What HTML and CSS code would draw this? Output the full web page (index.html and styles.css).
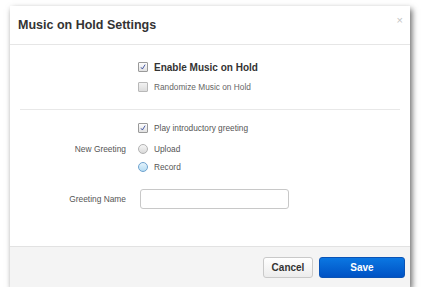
FILE: index.html
```html
<!DOCTYPE html>
<html lang="en">
  <head>
    <meta charset="UTF-8" />
    <meta name="viewport" content="width=device-width, initial-scale=1.0" />
    <title>Music on Hold Settings</title>
    <link rel="stylesheet" href="styles.css">
  </head>
  <body>
    <div class="modal">
      <div class="modalHeader">
        <h1>Music on Hold Settings</h1>
        <span class="close">&times;</span>
      </div>
      <div class="modalBody">
        <div class="section first">
          <div class="row">
            <span class="label"></span>
            <label class="check bold"><span class="box on"><svg viewBox="0 0 9 9"><path d="M2.2 4.8 L3.8 6.8 L6.9 1.8" /></svg></span>Enable Music on Hold</label>
          </div>
          <div class="row gap2">
            <span class="label"></span>
            <label class="check muted"><span class="box off"></span>Randomize Music on Hold</label>
          </div>
        </div>
        <div class="section second">
          <div class="row">
            <span class="label"></span>
            <label class="check"><span class="box on"><svg viewBox="0 0 9 9"><path d="M2.2 4.8 L3.8 6.8 L6.9 1.8" /></svg></span>Play introductory greeting</label>
          </div>
          <div class="row gap3">
            <span class="label">New Greeting</span>
            <label class="check"><span class="radio"></span>Upload</label>
          </div>
          <div class="row">
            <span class="label"></span>
            <label class="check"><span class="radio hover"></span>Record</label>
          </div>
          <div class="row field">
            <span class="label">Greeting Name</span>
            <input type="text" class="nameInput" />
          </div>
        </div>
      </div>
      <div class="modalFooter">
        <button class="btn cancel">Cancel</button>
        <button class="btn save">Save</button>
      </div>
    </div>
  </body>
</html>
```

FILE: styles.css
```css
body {
  margin: 0;
  background: #fff;
  font-family: "Liberation Sans", Arial, sans-serif;
}
.modal {
  width: 400px;
  margin: 6px 0 0 10px;
  background: #fff;
  box-shadow: 2px 3px 6px rgba(0, 0, 0, 0.6);
}
.modalHeader {
  height: 38px;
  border-bottom: 1px solid #e6e6e6;
  display: flex;
  align-items: center;
  justify-content: space-between;
  padding: 0 8px 0 8px;
}
h1 {
  margin: 0;
  font-size: 12.5px;
  font-weight: bold;
  color: #333;
}
.close {
  font-size: 11px;
  color: #c4c4c4;
  margin-top: -10px;
  margin-right: -1px;
}
.section {
  margin: 0 10px;
}
.section.first {
  padding: 13px 0 13px;
  border-bottom: 1px solid #e8e8e8;
}
.section.second {
  padding: 9px 0 37px;
}
.row {
  display: flex;
  align-items: center;
  height: 18px;
}
.row.gap2 {
  margin-top: 2px;
}
.row.gap3 {
  margin-top: 3px;
}
.row.field {
  height: 20px;
  margin-top: 13px;
}
.label {
  width: 106px;
  margin-right: 12px;
  text-align: right;
  font-size: 8.4px;
  color: #555;
}
.check {
  display: flex;
  align-items: center;
  font-size: 8.3px;
  color: #555;
}
.check.bold {
  font-size: 10px;
  font-weight: bold;
  color: #333;
}
.check.muted {
  color: #666;
}
.box {
  width: 8px;
  height: 8px;
  border: 1px solid #9a9a9a;
  border-radius: 1px;
  background: linear-gradient(#fdfdfd, #e2e2e2);
  margin-right: 6px;
  display: flex;
}
.box.off {
  border-color: #b8b8b8;
  background: linear-gradient(#f2f2f2, #dcdcdc);
}
.box svg {
  width: 8px;
  height: 8px;
}
.box path {
  fill: none;
  stroke: #34489a;
  stroke-width: 1;
}
.radio {
  width: 8px;
  height: 8px;
  border: 1px solid #b2b2b2;
  border-radius: 50%;
  background: linear-gradient(#f6f6f6, #dadada);
  margin-right: 6px;
}
.radio.hover {
  border-color: #6ea3cf;
  background: linear-gradient(#e4f3fc, #b6dcf3);
}
.nameInput {
  width: 149px;
  height: 20px;
  box-sizing: border-box;
  margin-left: 2px;
  border: 1px solid #c8c8c8;
  border-radius: 3px;
  padding: 0 5px;
}
.modalFooter {
  height: 41px;
  box-sizing: border-box;
  border-top: 1px solid #e2e2e2;
  background: #f4f4f4;
  display: flex;
  justify-content: flex-end;
  align-items: flex-start;
  padding: 10px 5px 0 0;
  gap: 6px;
}
.btn {
  height: 21px;
  border-radius: 3px;
  font-family: "Liberation Sans", Arial, sans-serif;
  font-size: 10px;
  font-weight: bold;
  padding: 0;
}
.cancel {
  width: 50px;
  color: #333;
  border: 1px solid #c9c9c9;
  background: linear-gradient(#ffffff, #ececec);
}
.save {
  width: 86px;
  color: #fff;
  border: 1px solid #0a53b5;
  background: linear-gradient(#0b77e2, #0052c4);
}
```
